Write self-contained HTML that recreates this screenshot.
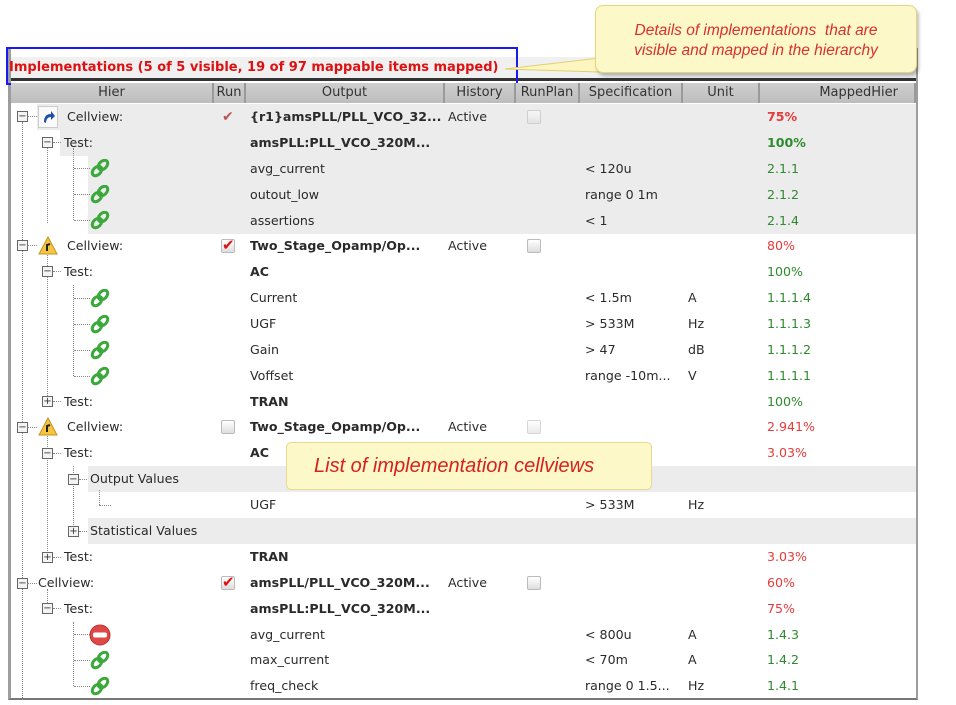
<!DOCTYPE html>
<html><head><meta charset="utf-8"><style>
*{margin:0;padding:0;box-sizing:border-box}
body{width:956px;height:703px;background:#fff;position:relative;overflow:hidden;font-family:"DejaVu Sans","Liberation Sans",sans-serif;font-size:13px;color:#2a2a2a}
.a{position:absolute;white-space:nowrap}
.r{position:absolute;height:26px;line-height:26px;font-size:12.6px}
.b{font-weight:bold}
.red{color:#e83a3a}.grn{color:#2e8a2e}
.exp{position:absolute;width:11px;height:11px;border:1px solid #666;background:#f4f4f4;font-size:10px;line-height:9px;text-align:center;color:#333}
.hd{position:absolute;top:83px;height:20px;line-height:19px;background:linear-gradient(#cfcfcf,#bdbdbd);border-right:2px solid #9a9a9a;text-align:center;color:#333}
.cb{position:absolute;width:14px;height:14px;border:1px solid #bbb;border-radius:2px;background:linear-gradient(#fff,#ddd)}
#w{position:absolute;left:0;top:2px;width:956px;height:703px}
</style></head><body>
<div class="a" style="left:8px;top:48px;width:910px;height:652px;background:#fff;border-left:3px solid #9d9d9d;border-right:2px solid #9d9d9d;border-bottom:2px solid #777"></div>
<div class="a" style="left:11px;top:57px;width:905px;height:22px;background:#f0f0f0"></div>
<div class="a" style="left:11px;top:78px;width:905px;height:3px;background:#333"></div>
<div class="a b" style="left:9px;top:58px;font-size:13px;color:#dd1111;line-height:20px">Implementations (5 of 5 visible, 19 of 97 mappable items mapped)</div>
<div class="a" style="left:6px;top:47px;width:512px;height:38px;border:2px solid #1a1aee"></div>
<div class="hd" style="left:11px;width:203px">Hier</div>
<div class="hd" style="left:214px;width:32px">Run</div>
<div class="hd" style="left:246px;width:199px">Output</div>
<div class="hd" style="left:445px;width:71px">History</div>
<div class="hd" style="left:516px;width:64px">RunPlan</div>
<div class="hd" style="left:580px;width:103px">Specification</div>
<div class="hd" style="left:683px;width:77px">Unit</div>
<div class="hd" style="left:760px;width:156px;text-align:right;padding-right:16px">MappedHier</div>
<svg width="0" height="0" style="position:absolute"><defs>
<g id="lk"><ellipse cx="7" cy="12" rx="5.5" ry="3.8" transform="rotate(-45 7 12)" fill="none" stroke="#3aa83a" stroke-width="3"/><ellipse cx="13" cy="6" rx="5.5" ry="3.8" transform="rotate(-45 13 6)" fill="none" stroke="#3aa83a" stroke-width="3"/></g>
</defs></svg>
<div id="w">
<div class="a" style="left:37px;top:102px;width:879px;height:26px;background:#ececec"></div>
<div class="a" style="left:60px;top:128px;width:856px;height:26px;background:#ececec"></div>
<div class="a" style="left:88px;top:154px;width:828px;height:78px;background:#ececec"></div>
<div class="a" style="left:88px;top:464px;width:828px;height:26px;background:#ececec"></div>
<div class="a" style="left:88px;top:516px;width:828px;height:26px;background:#ececec"></div>
<div class="a" style="left:22px;top:120px;height:578px;border-left:1px dotted #888"></div>
<div class="a" style="left:47px;top:146px;height:75px;border-left:1px dotted #888"></div>
<div class="a" style="left:73px;top:146px;height:72px;border-left:1px dotted #888"></div>
<div class="a" style="left:47px;top:250px;height:150px;border-left:1px dotted #888"></div>
<div class="a" style="left:73px;top:283px;height:91px;border-left:1px dotted #888"></div>
<div class="a" style="left:47px;top:431px;height:124px;border-left:1px dotted #888"></div>
<div class="a" style="left:73px;top:464px;height:65px;border-left:1px dotted #888"></div>
<div class="a" style="left:99px;top:488px;height:15px;border-left:1px dotted #888"></div>
<div class="a" style="left:47px;top:587px;height:20px;border-left:1px dotted #888"></div>
<div class="a" style="left:73px;top:620px;height:64px;border-left:1px dotted #888"></div>

<div class="exp" style="left:17px;top:109px">−</div><div class="a" style="left:27px;top:114px;width:10px;border-top:1px dotted #888"></div>
<div class="a" style="left:38px;top:104px;width:20px;height:22px;background:#fafafa;border:1px solid #ccc"><svg width="18" height="20"><path d="M5 15 C5 9 8 7 12 7 L12 4 L16 9 L12 13 L12 10 C9 10 7 12 7 16Z" fill="#1d4fa8"/></svg></div>
<div class="r" style="left:67px;top:102px">Cellview:</div>
<div class="a red" style="left:222px;top:108px;font-size:14px;line-height:14px;color:#b55">✔</div>
<div class="r b" style="left:250px;top:102px">{r1}amsPLL/PLL_VCO_32...</div>
<div class="r" style="left:448px;top:102px">Active</div>
<div class="cb" style="left:527px;top:108px;opacity:.6"></div>
<div class="r b red" style="left:767px;top:102px">75%</div>

<div class="exp" style="left:42px;top:135px">−</div><div class="a" style="left:53px;top:140px;width:8px;border-top:1px dotted #888"></div>
<div class="r" style="left:64px;top:128px">Test:</div>
<div class="r b" style="left:250px;top:128px">amsPLL:PLL_VCO_320M...</div>
<div class="r b grn" style="left:767px;top:128px">100%</div>

<div class="a" style="left:74px;top:166px;width:16px;border-top:1px dotted #888"></div><svg class="a" style="left:90px;top:157px" width="20" height="20"><use href="#lk"/></svg>
<div class="r" style="left:250px;top:154px">avg_current</div><div class="r" style="left:585px;top:154px">&lt; 120u</div><div class="r grn" style="left:767px;top:154px">2.1.1</div>
<div class="a" style="left:74px;top:192px;width:16px;border-top:1px dotted #888"></div><svg class="a" style="left:90px;top:183px" width="20" height="20"><use href="#lk"/></svg>
<div class="r" style="left:250px;top:180px">outout_low</div><div class="r" style="left:585px;top:180px">range 0 1m</div><div class="r grn" style="left:767px;top:180px">2.1.2</div>
<div class="a" style="left:74px;top:218px;width:16px;border-top:1px dotted #888"></div><svg class="a" style="left:90px;top:209px" width="20" height="20"><use href="#lk"/></svg>
<div class="r" style="left:250px;top:206px">assertions</div><div class="r" style="left:585px;top:206px">&lt; 1</div><div class="r grn" style="left:767px;top:206px">2.1.4</div>

<div class="exp" style="left:17px;top:238px">−</div><div class="a" style="left:27px;top:243px;width:10px;border-top:1px dotted #888"></div>
<svg class="a" style="left:38px;top:234px" width="20" height="19"><path d="M10 1 L19 18 L1 18Z" fill="#f5c542" stroke="#c89020"/><path d="M9 15 L9 9 L12 8" stroke="#222" stroke-width="2" fill="none"/></svg>
<div class="r" style="left:67px;top:231px">Cellview:</div>
<div class="cb" style="left:221px;top:237px"></div><div class="a" style="left:222px;top:234px;color:#e01010;font-size:15px">✔</div>
<div class="r b" style="left:250px;top:231px">Two_Stage_Opamp/Op...</div>
<div class="r" style="left:448px;top:231px">Active</div>
<div class="cb" style="left:527px;top:237px"></div>
<div class="r red" style="left:767px;top:231px">80%</div>

<div class="exp" style="left:42px;top:264px">−</div><div class="a" style="left:53px;top:269px;width:8px;border-top:1px dotted #888"></div>
<div class="r" style="left:64px;top:257px">Test:</div><div class="r b" style="left:250px;top:257px">AC</div><div class="r grn" style="left:767px;top:257px">100%</div>

<div class="a" style="left:74px;top:296px;width:16px;border-top:1px dotted #888"></div><svg class="a" style="left:90px;top:287px" width="20" height="20"><use href="#lk"/></svg>
<div class="r" style="left:250px;top:283px">Current</div><div class="r" style="left:585px;top:283px">&lt; 1.5m</div><div class="r" style="left:688px;top:283px">A</div><div class="r grn" style="left:767px;top:283px">1.1.1.4</div>
<div class="a" style="left:74px;top:322px;width:16px;border-top:1px dotted #888"></div><svg class="a" style="left:90px;top:313px" width="20" height="20"><use href="#lk"/></svg>
<div class="r" style="left:250px;top:309px">UGF</div><div class="r" style="left:585px;top:309px">&gt; 533M</div><div class="r" style="left:688px;top:309px">Hz</div><div class="r grn" style="left:767px;top:309px">1.1.1.3</div>
<div class="a" style="left:74px;top:348px;width:16px;border-top:1px dotted #888"></div><svg class="a" style="left:90px;top:339px" width="20" height="20"><use href="#lk"/></svg>
<div class="r" style="left:250px;top:335px">Gain</div><div class="r" style="left:585px;top:335px">&gt; 47</div><div class="r" style="left:688px;top:335px">dB</div><div class="r grn" style="left:767px;top:335px">1.1.1.2</div>
<div class="a" style="left:74px;top:374px;width:16px;border-top:1px dotted #888"></div><svg class="a" style="left:90px;top:365px" width="20" height="20"><use href="#lk"/></svg>
<div class="r" style="left:250px;top:361px">Voffset</div><div class="r" style="left:585px;top:361px">range -10m...</div><div class="r" style="left:688px;top:361px">V</div><div class="r grn" style="left:767px;top:361px">1.1.1.1</div>

<div class="exp" style="left:42px;top:394px">+</div><div class="a" style="left:53px;top:399px;width:8px;border-top:1px dotted #888"></div>
<div class="r" style="left:64px;top:387px">Test:</div><div class="r b" style="left:250px;top:387px">TRAN</div><div class="r grn" style="left:767px;top:387px">100%</div>

<div class="exp" style="left:17px;top:420px">−</div><div class="a" style="left:27px;top:425px;width:10px;border-top:1px dotted #888"></div>
<svg class="a" style="left:38px;top:415px" width="20" height="19"><path d="M10 1 L19 18 L1 18Z" fill="#f5c542" stroke="#c89020"/><path d="M9 15 L9 9 L12 8" stroke="#222" stroke-width="2" fill="none"/></svg>
<div class="r" style="left:67px;top:412px">Cellview:</div>
<div class="cb" style="left:221px;top:418px"></div>
<div class="r b" style="left:250px;top:412px">Two_Stage_Opamp/Op...</div>
<div class="r" style="left:448px;top:412px">Active</div>
<div class="cb" style="left:527px;top:418px;opacity:.6"></div>
<div class="r red" style="left:767px;top:412px">2.941%</div>

<div class="exp" style="left:42px;top:446px">−</div><div class="a" style="left:53px;top:451px;width:8px;border-top:1px dotted #888"></div>
<div class="r" style="left:64px;top:438px">Test:</div><div class="r b" style="left:250px;top:438px">AC</div><div class="r red" style="left:767px;top:438px">3.03%</div>

<div class="exp" style="left:68px;top:472px">−</div><div class="a" style="left:79px;top:477px;width:8px;border-top:1px dotted #888"></div>
<div class="r" style="left:90px;top:464px">Output Values</div>
<div class="a" style="left:99px;top:503px;width:12px;border-top:1px dotted #888"></div>
<div class="r" style="left:250px;top:490px">UGF</div><div class="r" style="left:585px;top:490px">&gt; 533M</div><div class="r" style="left:688px;top:490px">Hz</div>
<div class="exp" style="left:68px;top:524px">+</div><div class="a" style="left:79px;top:529px;width:8px;border-top:1px dotted #888"></div>
<div class="r" style="left:90px;top:516px">Statistical Values</div>

<div class="exp" style="left:42px;top:550px">+</div><div class="a" style="left:53px;top:555px;width:8px;border-top:1px dotted #888"></div>
<div class="r" style="left:64px;top:542px">Test:</div><div class="r b" style="left:250px;top:542px">TRAN</div><div class="r red" style="left:767px;top:542px">3.03%</div>

<div class="exp" style="left:17px;top:576px">−</div><div class="a" style="left:27px;top:581px;width:10px;border-top:1px dotted #888"></div>
<div class="r" style="left:38px;top:568px">Cellview:</div>
<div class="cb" style="left:221px;top:574px"></div><div class="a" style="left:222px;top:571px;color:#e01010;font-size:15px">✔</div>
<div class="r b" style="left:250px;top:568px">amsPLL/PLL_VCO_320M...</div>
<div class="r" style="left:448px;top:568px">Active</div>
<div class="cb" style="left:527px;top:574px"></div>
<div class="r red" style="left:767px;top:568px">60%</div>

<div class="exp" style="left:42px;top:601px">−</div><div class="a" style="left:53px;top:606px;width:8px;border-top:1px dotted #888"></div>
<div class="r" style="left:64px;top:594px">Test:</div><div class="r b" style="left:250px;top:594px">amsPLL:PLL_VCO_320M...</div><div class="r red" style="left:767px;top:594px">75%</div>

<div class="a" style="left:74px;top:632px;width:16px;border-top:1px dotted #888"></div>
<svg class="a" style="left:89px;top:622px" width="22" height="22"><circle cx="11" cy="11" r="10" fill="#e04848" stroke="#b83030"/><rect x="4" y="8.5" width="14" height="5" rx="2" fill="#fff"/></svg>
<div class="r" style="left:250px;top:620px">avg_current</div><div class="r" style="left:585px;top:620px">&lt; 800u</div><div class="r" style="left:688px;top:620px">A</div><div class="r grn" style="left:767px;top:620px">1.4.3</div>
<div class="a" style="left:74px;top:658px;width:16px;border-top:1px dotted #888"></div><svg class="a" style="left:90px;top:649px" width="20" height="20"><use href="#lk"/></svg>
<div class="r" style="left:250px;top:645px">max_current</div><div class="r" style="left:585px;top:645px">&lt; 70m</div><div class="r" style="left:688px;top:645px">A</div><div class="r grn" style="left:767px;top:645px">1.4.2</div>
<div class="a" style="left:74px;top:684px;width:16px;border-top:1px dotted #888"></div><svg class="a" style="left:90px;top:675px" width="20" height="20"><use href="#lk"/></svg>
<div class="r" style="left:250px;top:671px">freq_check</div><div class="r" style="left:585px;top:671px">range 0 1.5...</div><div class="r" style="left:688px;top:671px">Hz</div><div class="r grn" style="left:767px;top:671px">1.4.1</div>
</div>

<svg class="a" style="left:490px;top:40px" width="120" height="40"><path d="M15 29 L110 18 L110 32 Z" fill="#fdf6c0" stroke="#e0cf70"/></svg>
<div class="a" style="left:595px;top:5px;width:322px;height:68px;background:#fcf8c8;border:1px solid #e3d480;border-radius:8px;box-shadow:2px 3px 3px rgba(0,0,0,.25);font-family:'Liberation Sans',sans-serif;font-style:italic;font-size:15.5px;color:#d83030;text-align:center;line-height:20px;padding-top:15px;white-space:normal">Details of implementations&nbsp; that are<br>visible and mapped in the hierarchy</div>
<div class="a" style="left:286px;top:442px;width:366px;height:48px;background:#fcf8c8;border:1px solid #e8d890;border-radius:5px;font-family:'Liberation Sans',sans-serif;font-style:italic;font-size:20px;color:#d82020;line-height:46px;padding-left:27px">List of implementation cellviews</div>
</body></html>
